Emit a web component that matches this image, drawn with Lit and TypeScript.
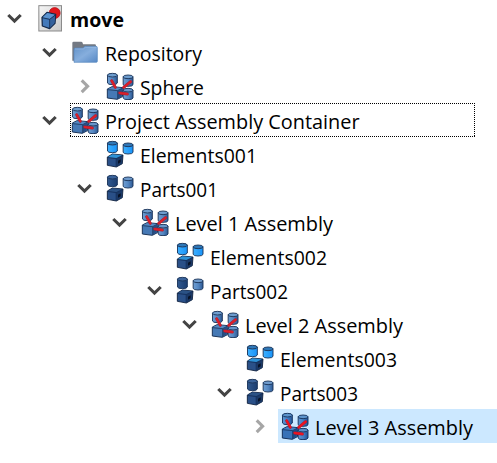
import { LitElement, html, css, svg } from "lit";
import { customElement, property } from "lit/decorators.js";

type IconName = "doc" | "folder" | "assembly" | "elements" | "parts";

interface TreeRow {
  label: string;
  level: number;
  icon: IconName;
  state: "open" | "closed" | "leaf";
  width: number;
  bold?: boolean;
  focused?: boolean;
  selected?: boolean;
}

const rows: TreeRow[] = [
  { label: "move", level: 0, icon: "doc", state: "open", width: 54, bold: true },
  { label: "Repository", level: 1, icon: "folder", state: "open", width: 97 },
  { label: "Sphere", level: 2, icon: "assembly", state: "closed", width: 64 },
  { label: "Project Assembly Container", level: 1, icon: "assembly", state: "open", width: 254.5, focused: true },
  { label: "Elements001", level: 2, icon: "elements", state: "leaf", width: 117 },
  { label: "Parts001", level: 2, icon: "parts", state: "open", width: 78 },
  { label: "Level 1 Assembly", level: 3, icon: "assembly", state: "open", width: 158 },
  { label: "Elements002", level: 4, icon: "elements", state: "leaf", width: 117 },
  { label: "Parts002", level: 4, icon: "parts", state: "open", width: 78 },
  { label: "Level 2 Assembly", level: 5, icon: "assembly", state: "open", width: 158 },
  { label: "Elements003", level: 6, icon: "elements", state: "leaf", width: 117 },
  { label: "Parts003", level: 6, icon: "parts", state: "open", width: 78 },
  { label: "Level 3 Assembly", level: 7, icon: "assembly", state: "closed", width: 158, selected: true },
];

const cylinder = (x: number, y: number, h: number, body: string, top: string, edge = "#1c3559") => svg`
  <path d="M${x + 1.5} ${y + 6}V${y + h - 5}Q${x + 3} ${y + h} ${x + 16} ${y + h}Q${x + 30} ${y + h} ${x + 31} ${y + h - 5}V${y + 6}Z"
    fill=${body} stroke=${edge} stroke-width="2.8"/>
  <ellipse cx=${x + 16.2} cy=${y + 6.5} rx="14.7" ry="5.5" fill=${top} stroke=${edge} stroke-width="2.8"/>`;

const gradients = svg`
  <defs>
    <linearGradient id="steel"><stop offset="0" stop-color="#6f9fd3"/><stop offset=".5" stop-color="#5688c3"/><stop offset="1" stop-color="#2c5893"/></linearGradient>
    <linearGradient id="navy"><stop offset="0" stop-color="#31598f"/><stop offset="1" stop-color="#1b3d70"/></linearGradient>
    <linearGradient id="sky"><stop offset="0" stop-color="#3eb0ff"/><stop offset="1" stop-color="#1893f8"/></linearGradient>
    <linearGradient id="fold" x1="0" y1="0" x2="1" y2="1"><stop offset="0" stop-color="#6392c8"/><stop offset=".5" stop-color="#86aedd"/><stop offset="1" stop-color="#5688c5"/></linearGradient>
    <linearGradient id="paper" x1="0" y1="0" x2="1" y2="1"><stop offset="0" stop-color="#f5f5f5"/><stop offset="1" stop-color="#c9c9c9"/></linearGradient>
  </defs>`;

const darkCube = (top: string) => svg`
  <path d="M4 51L19 42L51 45L49 71L31 81L4 76Z" fill="#16325f" stroke="#10223f" stroke-width="2.6" stroke-linejoin="round"/>
  <path d="M6 51L19 43L48 46L31 54Z" fill=${top}/>
  <path d="M6 54L29 57V79L6 75Z" fill="#2a5088"/>
  <path d="M31 57L48 49V71L31 79Z" fill="#1a3866"/>
  <path d="M36 62L44 58V67L36 71Z" fill="#081226"/>`;

const pictures: Record<IconName, unknown> = {
  doc: svg`
    <rect x="8.5" y="5" width="68" height="76" fill="url(#paper)" stroke="#8b8b8b" stroke-width="3"/>
    <circle cx="56" cy="27" r="16.5" fill="#e0161c" stroke="#b00c14" stroke-width="2"/>
    <path d="M18 40L33 25L59 31L57 58L41 74L19 66Z" fill="#4379ba" stroke="#14294a" stroke-width="3.8" stroke-linejoin="round"/>
    <path d="M20 40L34 27L56 32L42 45Z" fill="#5c93cf"/>
    <path d="M43 46L57 34L55 57L42 71Z" fill="#34619c"/>
    <path d="M18 41L41 46L58 33M41 46V72" fill="none" stroke="#14294a" stroke-width="2.6"/>`,
  folder: svg`
    <path d="M4 68V15Q4 11 8 11H30Q34 11 35 15L36 19H71Q75 19 75 23V68Z" fill="#737983"/>
    <path d="M9 70V33Q9 30 13 30H36L42 25H75Q79 25 79 29V70Q79 73 76 73H9Z" fill="url(#fold)" stroke="#5686be" stroke-width="2"/>
    <path d="M12 33H37L43 28H76" fill="none" stroke="#9dbde4" stroke-width="2"/>`,
  assembly: svg`
    ${cylinder(3, 3, 35, "url(#steel)", "#6e9dce")}
    ${cylinder(50, 8, 35, "url(#steel)", "#6e9dce")}
    <path d="M4 51L18 44L52 47L49 74L34 82L4 78Z" fill="#4679b5" stroke="#1c3559" stroke-width="3" stroke-linejoin="round"/>
    <path d="M6 51L19 46L49 48L34 55Z" fill="#5789c2"/>
    <path d="M36 57L50 49L47 73L36 80Z" fill="#274f86"/>
    <path d="M5 53L35 56L50 48M35 56V81" fill="none" stroke="#1c3559" stroke-width="2.4"/>
    ${cylinder(50, 48, 35, "url(#steel)", "#6795ca")}
    <path d="M17 26L28 46M74 29L53 46M41 63L64 66" fill="none" stroke="#9c1f35" stroke-width="8.5" stroke-linecap="round"/>
    <path d="M17 26L28 46M74 29L53 46M41 63L64 66" fill="none" stroke="#da202b" stroke-width="6.5" stroke-linecap="round"/>`,
  elements: svg`
    ${cylinder(3, 3, 35, "url(#sky)", "#2f78b8")}
    ${cylinder(50, 8, 34, "url(#sky)", "#2f78b8")}
    ${darkCube("#2d91d5")}`,
  parts: svg`
    ${cylinder(3, 3, 35, "url(#navy)", "#3a639b")}
    ${cylinder(50, 8, 34, "url(#steel)", "#6f9bcd")}
    ${darkCube("#2b5285")}`,
};

@customElement("tree-icon")
class TreeIcon extends LitElement {
  @property() name: IconName = "doc";

  static styles = css`
    :host { display: block; width: 28px; height: 28px; flex: none; }
    svg { display: block; width: 28px; height: 28px; }
  `;

  render() {
    return html`<svg viewBox="0 0 84 84">${gradients}${pictures[this.name]}</svg>`;
  }
}

@customElement("app-root")
class AppRoot extends LitElement {
  static styles = css`
    :host {
      display: block;
      box-sizing: border-box;
      width: 497px;
      height: 463px;
      padding-top: 1px;
      overflow: hidden;
      background: #fff;
      color: #000;
      font: 20px/34px "Open Sans", "Noto Sans", sans-serif;
    }
    .row { display: flex; height: 34px; }
    .toggle { flex: none; width: 27px; height: 34px; margin-left: 1px; }
    .toggle path { fill: none; stroke: #444; stroke-width: 3.1; }
    .toggle .closed { stroke: #a6a6a6; }
    .item {
      position: relative;
      display: flex;
      flex: 1;
      align-items: center;
      box-sizing: border-box;
      padding-left: 3px;
      margin-left: 5px;
    }
    .selected { background: #cce8ff; }
    .selected tree-icon { filter: saturate(1.25) brightness(0.93); }
    .focus {
      position: absolute;
      inset: 0 22px 0 2px;
      background:
        repeating-linear-gradient(90deg, #000 0 1px, transparent 1px 2px) top / 100% 1px no-repeat,
        repeating-linear-gradient(90deg, #000 0 1px, transparent 1px 2px) bottom / 100% 1px no-repeat,
        repeating-linear-gradient(180deg, #000 0 1px, transparent 1px 2px) left / 1px 100% no-repeat,
        repeating-linear-gradient(180deg, #000 0 1px, transparent 1px 2px) right / 1px 100% no-repeat;
    }
    .label { margin-left: 6px; height: 34px; overflow: visible; }
    .label text { font: 20px "Open Sans", "Noto Sans", sans-serif; }
    .label .bold { font-weight: 700; }
  `;

  render() {
    return html`${rows.map((r) => html`
      <div class="row" style="padding-left:${r.level * 35}px">
        <svg class="toggle" viewBox="0 0 27 34">
          ${r.state === "open" ? svg`<path d="M7.3 14L13.5 20.1L19.7 14"/>` : ""}
          ${r.state === "closed" ? svg`<path class="closed" d="M10.7 11.3L16.6 17.2L10.7 23.1"/>` : ""}
        </svg>
        <div class="item ${r.selected ? "selected" : ""}">
          ${r.focused ? html`<div class="focus"></div>` : ""}
          <tree-icon name=${r.icon}></tree-icon>
          <svg class="label" width=${r.width} height="34">
            <text class=${r.bold ? "bold" : ""} x="0" y="26" textLength=${r.width} lengthAdjust="spacingAndGlyphs">${r.label}</text>
          </svg>
        </div>
      </div>`)}`;
  }
}
